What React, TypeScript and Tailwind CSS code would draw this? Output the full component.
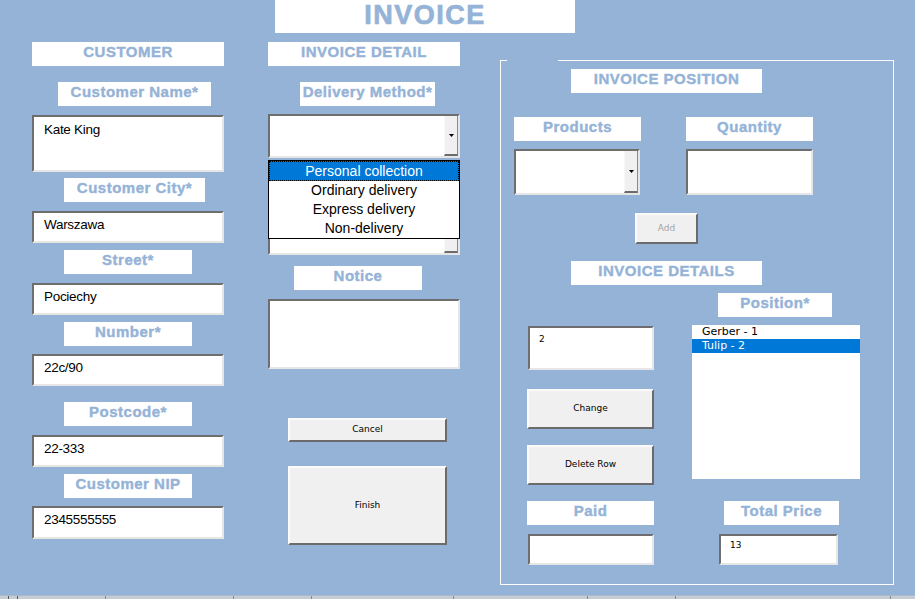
import React from "react";

const LBL =
  "flex justify-center h-[24px] bg-white text-[#95b3d7] font-bold text-[15px] leading-[18px] pt-[1px] tracking-[0.5px] [-webkit-text-stroke:0.4px_#95b3d7] whitespace-nowrap";
const SUNK =
  "bg-white border-2 border-t-[#6e6e6e] border-l-[#6e6e6e] border-r-[#e6e6e6] border-b-[#e6e6e6]";
const BTN =
  "bg-[#f0f0f0] border-2 border-t-[#fbfbfb] border-l-[#fbfbfb] border-r-[#6b6b6b] border-b-[#6b6b6b] flex items-center justify-center font-['DejaVu_Sans',sans-serif] text-[9px] text-black";
const TXT = "text-[13.5px] leading-[16px] tracking-[-0.3px] text-black pl-[10px]";

function Tri() {
  return (
    <svg width="5" height="3" viewBox="0 0 5 3">
      <path d="M0 0h5L2.5 3z" fill="#000" />
    </svg>
  );
}

function DropBtn() {
  return (
    <div className="w-[14px] h-full bg-[#f0f0f0] border-l border-l-[#f8f8f8] border-r border-r-[#8a8a8a] border-b-2 border-b-[#6b6b6b] flex items-center justify-center">
      <Tri />
    </div>
  );
}

export default function App() {
  return (
    <div className="w-[915px] h-[599px] bg-[#95b3d7] flex flex-col overflow-hidden font-['Liberation_Sans',Arial,sans-serif]">
      <div className="ml-[275px] w-[300px] h-[33px] bg-white flex justify-center text-[#95b3d7] font-bold text-[27px] leading-[31px] tracking-[1.5px] [-webkit-text-stroke:0.7px_#95b3d7]">
        INVOICE
      </div>

      <div className="flex items-start mt-[9px] ml-[32px]">
        {/* Left column: customer */}
        <div className="w-[192px] flex flex-col">
          <div className={LBL}>CUSTOMER</div>
          <div className={`${LBL} mt-[16px] ml-[26px] w-[153px]`}>Customer Name*</div>
          <div className={`${SUNK} mt-[9px] h-[57px] pt-[5px] ${TXT}`}>Kate King</div>
          <div className={`${LBL} mt-[6px] ml-[32px] w-[141px]`}>Customer City*</div>
          <div className={`${SUNK} mt-[9px] h-[32px] pt-[4px] ${TXT}`}>Warszawa</div>
          <div className={`${LBL} mt-[7px] ml-[32px] w-[128px]`}>Street*</div>
          <div className={`${SUNK} mt-[9px] h-[32px] pt-[4px] ${TXT}`}>Pociechy</div>
          <div className={`${LBL} mt-[7px] ml-[32px] w-[128px]`}>Number*</div>
          <div className={`${SUNK} mt-[8px] h-[32px] pt-[4px] ${TXT}`}>22c/90</div>
          <div className={`${LBL} mt-[16px] ml-[32px] w-[128px]`}>Postcode*</div>
          <div className={`${SUNK} mt-[9px] h-[32px] pt-[4px] ${TXT}`}>22-333</div>
          <div className={`${LBL} mt-[7px] ml-[32px] w-[128px]`}>Customer NIP</div>
          <div className={`${SUNK} mt-[8px] h-[33px] pt-[4px] ${TXT}`}>2345555555</div>
        </div>

        {/* Middle column: invoice detail */}
        <div className="ml-[44px] w-[192px] flex flex-col">
          <div className={LBL}>INVOICE DETAIL</div>
          <div className={`${LBL} mt-[16px] ml-[32px] w-[135px]`}>Delivery Method*</div>
          <div className={`${SUNK} mt-[8px] h-[44px] flex`}>
            <div className="flex-1" />
            <DropBtn />
          </div>
          <div className="relative mt-[2px] h-[95px]">
            <div className={`${SUNK} h-full flex`}>
              <div className="flex-1" />
              <div className="w-[14px] h-full bg-[#f0f0f0] border-l border-l-[#f8f8f8] border-r border-r-[#8a8a8a] border-b-2 border-b-[#6b6b6b]" />
            </div>
            <div className="absolute left-0 right-0 top-0 border border-black bg-white flex flex-col text-[14px] leading-[19px] text-center text-black">
              <div className="bg-[#0078d7] text-white outline outline-1 outline-dotted outline-black -outline-offset-1 pt-[1px]">
                Personal collection
              </div>
              <div>Ordinary delivery</div>
              <div>Express delivery</div>
              <div>Non-delivery</div>
            </div>
          </div>
          <div className={`${LBL} mt-[11px] ml-[26px] w-[128px]`}>Notice</div>
          <div className={`${SUNK} mt-[9px] h-[70px]`} />
          <div className={`${BTN} mt-[49px] ml-[20px] w-[159px] h-[24px]`}>Cancel</div>
          <div className={`${BTN} mt-[24px] ml-[20px] w-[159px] h-[79px]`}>Finish</div>
        </div>

        {/* Right frame */}
        <div className="ml-[40px] mt-[18px] w-[394px] h-[525px] flex flex-col border-l border-r border-b border-white">
          <div className="flex h-px">
            <div className="w-[6px] bg-white" />
            <div className="w-[51px]" />
            <div className="flex-1 bg-white" />
          </div>
          <div className={`${LBL} mt-[8px] ml-[70px] w-[191px]`}>INVOICE POSITION</div>
          <div className="flex mt-[24px]">
            <div className={`${LBL} ml-[13px] w-[127px]`}>Products</div>
            <div className={`${LBL} ml-[45px] w-[127px]`}>Quantity</div>
          </div>
          <div className="flex mt-[8px]">
            <div className={`${SUNK} ml-[13px] w-[126px] h-[46px] flex`}>
              <div className="flex-1" />
              <DropBtn />
            </div>
            <div className={`${SUNK} ml-[46px] w-[127px] h-[46px]`} />
          </div>
          <div className={`${BTN} mt-[18px] ml-[134px] w-[63px] h-[31px] !text-[#a3a3a3]`}>Add</div>
          <div className={`${LBL} mt-[17px] ml-[70px] w-[191px]`}>INVOICE DETAILS</div>

          <div className="flex items-start mt-[8px]">
            <div className="ml-[26px] w-[127px] flex flex-col">
              <div className={`${SUNK} mt-[33px] ml-[1px] h-[44px] pl-[9px] pt-[5px] text-[9px] leading-[12px] text-black font-['DejaVu_Sans',sans-serif]`}>
                2
              </div>
              <div className={`${BTN} mt-[19px] h-[40px]`}>Change</div>
              <div className={`${BTN} mt-[16px] h-[40px]`}>Delete Row</div>
            </div>
            <div className="ml-[38px] w-[168px] flex flex-col">
              <div className={`${LBL} ml-[26px] w-[114px]`}>Position*</div>
              <div className="mt-[8px] h-[154px] bg-white flex flex-col font-['DejaVu_Sans',sans-serif] text-[11px] leading-[14px] text-black">
                <div className="pl-[10px]">Gerber - 1</div>
                <div className="pl-[10px] bg-[#0078d7] text-white">Tulip - 2</div>
              </div>
            </div>
          </div>

          <div className="flex items-start mt-[16px]">
            <div className="ml-[26px] w-[127px] flex flex-col">
              <div className={LBL}>Paid</div>
              <div className={`${SUNK} mt-[9px] ml-[1px] h-[31px]`} />
            </div>
            <div className="ml-[65px] flex flex-col">
              <div className={`${LBL} ml-[5px] w-[115px]`}>Total Price</div>
              <div className={`${SUNK} mt-[9px] w-[119px] h-[31px] pl-[9px] pt-[3px] text-[9px] leading-[12px] text-black font-['DejaVu_Sans',sans-serif]`}>
                13
              </div>
            </div>
          </div>
        </div>
      </div>

      <div className="mt-auto h-[4px] bg-[#c6ccd3] border-t border-t-[#aab9cb] flex">
        <div className="ml-[8px] w-px bg-[#555]" />
        <div className="ml-[8px] w-px bg-[#555]" />
        <div className="ml-[87px] w-px bg-[#8a8a8a]" />
        <div className="ml-[127px] w-px bg-[#8a8a8a]" />
        <div className="ml-[77px] w-px bg-[#8a8a8a]" />
        <div className="ml-[141px] w-px bg-[#8a8a8a]" />
        <div className="ml-[133px] w-px bg-[#8a8a8a]" />
        <div className="ml-[87px] w-px bg-[#8a8a8a]" />
        <div className="ml-[214px] w-px bg-[#8a8a8a]" />
      </div>
    </div>
  );
}
